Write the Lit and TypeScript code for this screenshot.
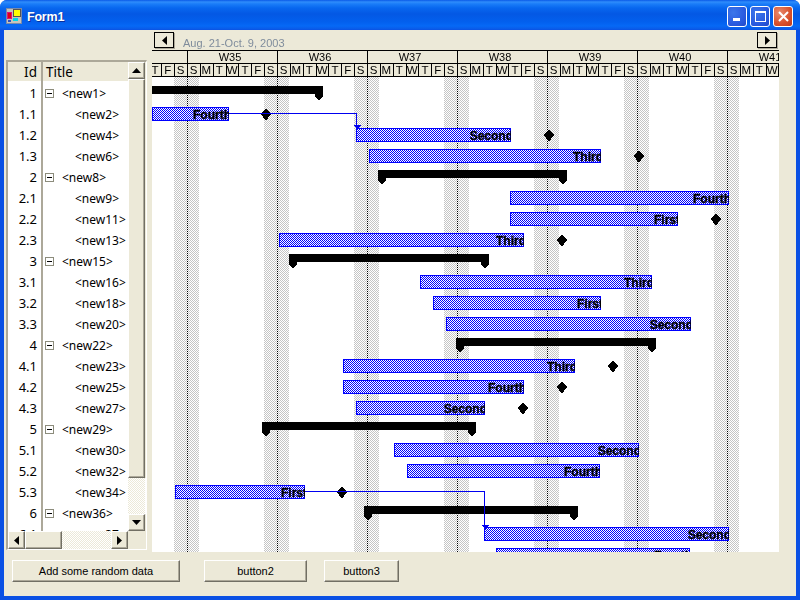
import { LitElement, html, svg, css } from "lit";
import { customElement } from "lit/decorators.js";

interface Row { id: string; n: number; parent: boolean }
const rows: Row[] = [
  ["1",1,1],["1.1",2,0],["1.2",4,0],["1.3",6,0],["2",8,1],["2.1",9,0],["2.2",11,0],["2.3",13,0],
  ["3",15,1],["3.1",16,0],["3.2",18,0],["3.3",20,0],["4",22,1],["4.1",23,0],["4.2",25,0],["4.3",27,0],
  ["5",29,1],["5.1",30,0],["5.2",32,0],["5.3",34,0],["6",36,1],["6.1",37,0],
].map(([id, n, p]) => ({ id: id as string, n: n as number, parent: !!p }));

// row index, start x, end x, label, milestone x
const bars: [number, number, number, string, number?][] = [
  [1,152,229,"Fourth",266],[2,356,511,"Second",549],[3,369,601,"Third",639],
  [5,510,729,"Fourth"],[6,510,678,"First",716],[7,279,524,"Third",562],
  [9,420,652,"Third"],[10,433,601,"First"],[11,446,691,"Second"],
  [13,343,575,"Third",613],[14,343,524,"Fourth",562],[15,356,485,"Second",523],
  [17,394,639,"Second"],[18,407,600,"Fourth"],[19,175,305,"First",342],
  [21,484,729,"Second"],[22,496,690,"Fourth"],
];
const summaries: [number, number, number][] = [
  [0,140,323],[4,378,567],[8,289,489],[12,456,656],[16,262,476],[20,364,578],
];
const weeks = [97,187,277,367,457,547,637,727];
const DAYS = ["S","M","T","W","T","F","S"];
const rowTop = (i: number) => 86 + 21 * i;
const OX = 152, OY = 50;

/** Paints a one-pixel checker with exact pixels. */
function checker(g: CanvasRenderingContext2D, x0: number, x1: number, y0: number, y1: number, color: string) {
  g.fillStyle = color;
  for (let y = y0; y < y1; y++) {
    for (let x = x0 + ((x0 + y) % 2); x < x1; x += 2) g.fillRect(x, y, 1, 1);
  }
}

@customElement("app-root")
export class AppRoot extends LitElement {
  static styles = css`
    :host { display: block; width: 800px; height: 600px; background: #fff; overflow: hidden; font-family: "Noto Sans", "DejaVu Sans", sans-serif; }
    .window { width: 800px; height: 600px; display: flex; flex-direction: column; border-radius: 7px 7px 0 0; overflow: hidden; background: #0a50e4; }
    .titlebar { height: 30px; flex: none; display: flex; align-items: center; padding: 0 7px 0 6px; gap: 5px;
      background: linear-gradient(#0a5ae8 0, #2f8dfb 2px, #1a7cf8 4px, #0867ef 8px, #0458e4 14px, #0360ee 22px, #0669f6 26px, #0a5be8 29px, #0a50e4 30px); }
    .app-icon { flex: none; margin-top: 1px; }
    .title { flex: 1; color: #fff; font: bold 12.5px "Liberation Sans", sans-serif; letter-spacing: -.2px; margin-top: 3px; text-shadow: 1px 1px 0 #0a2f9c; }
    .caps { display: flex; gap: 3px; margin-top: 3px; }
    .cap { width: 20px; height: 21px; box-sizing: border-box; border: 1px solid #fff; border-radius: 3px; display: flex; align-items: center; justify-content: center;
      background: radial-gradient(circle at 30% 30%, #3c76ea, #2a5be0 60%, #2248c8); }
    .cap.close { background: radial-gradient(circle at 30% 30%, #e88a6e, #d8502c 60%, #c0391a); }
    .client { flex: 1; margin: 0 4px 4px; background: #ece9d8; display: flex; flex-direction: column; min-height: 0; }
    .main { height: 522px; display: flex; flex: none; padding-left: 2px; gap: 5px; }
    .tree { width: 141px; height: 490px; margin-top: 30px; box-sizing: border-box; flex: none; display: grid;
      grid-template-columns: minmax(0, 1fr) 18px; grid-template-rows: minmax(0, 1fr) 18px;
      border-top: 2px solid #aca899; border-left: 2px solid #aca899; border-right: 1px solid #fff; border-bottom: 1px solid #fff; background: #ece9d8; }
    .list { overflow: hidden; background: #fff; font-size: 12px; color: #000; }
    .lrow { display: grid; grid-template-columns: 35px 1fr; height: 21px; align-items: center; }
    .lrow.head { height: 19px; background: #ece9d8; }
    .lid { padding: 0 4px 0 0; box-sizing: border-box; border-right: 2px solid #aca899; height: 100%; display: flex; align-items: center; justify-content: flex-end; width: 35px; }
    .lrow:not(.head) .lid, .lrow:not(.head) .ltitle { padding-top: 3px; box-sizing: border-box; }
    .lrow:not(.head) .lid { font-size: 13px; }
    .lrow.head .lid { font-size: 13.5px; }
    .ltitle { display: flex; align-items: center; padding-left: 2px; gap: 8px; white-space: nowrap; height: 100%; }
    .ltitle.leaf { padding-left: 32px; }
    .ltitle.hd { padding-left: 3px; font-size: 13.5px; }
    .minus { width: 9px; height: 9px; flex: none; box-sizing: border-box; border: 1px solid #8c8c7c; position: relative; background: #fff; }
    .minus::after { content: ""; position: absolute; left: 1px; right: 1px; top: 3px; height: 1px; background: #000; }
    .vbar { display: flex; flex-direction: column; background: #ece9d8; min-height: 0; }
    .hbar { display: flex; background: #ece9d8; min-width: 0; }
    .sbtn { box-sizing: border-box; flex: none; display: flex; align-items: center; justify-content: center; background: #ece9d8;
      border-top: 1px solid #fff; border-left: 1px solid #fff; border-right: 1px solid #716f64; border-bottom: 1px solid #716f64; box-shadow: inset -1px -1px 0 #aca899; }
    .vbar .sbtn.arrow { height: 17px; width: 17px; }
    .hbar .sbtn.arrow { width: 17px; height: 18px; }
    .vthumb { height: 399px; width: 17px; }
    .hthumb { width: 37px; height: 18px; }
    .track { flex: 1 1 0; overflow: hidden; background: #fff; min-width: 0; min-height: 0; }
    .track canvas { display: block; }
    .corner { background: #ece9d8; }
    .chart { width: 627px; flex: none; display: flex; flex-direction: column; }
    .nav { height: 20px; flex: none; display: flex; align-items: flex-start; padding: 2px 2px 0; box-sizing: border-box; }
    .navbtn { width: 20px; height: 16px; box-sizing: border-box; border: 1px solid #000; display: flex; align-items: center; justify-content: center; box-shadow: 1px 1px 0 #aca899; }
    .range { flex: 1; margin: 5px 0 0 9px; font: 11px "Liberation Sans", sans-serif; color: #7f8c9c; }
    .canvas { position: relative; width: 627px; height: 502px; flex: none; }
    .paint { display: block; }
    svg.gantt { position: absolute; inset: 0; display: block; }
    .day { font: 11.5px "Liberation Sans", sans-serif; fill: #000; text-anchor: middle; }
    .wk { font: 11px "Liberation Sans", sans-serif; fill: #000; text-anchor: middle; }
    .lbl { font: bold 12px "Liberation Sans", sans-serif; fill: #000; stroke: #000; stroke-width: .35px; text-anchor: end; }
    .buttons { flex: 1; display: flex; padding: 8px 0 0 8px; align-items: flex-start; }
    .btn { height: 22px; box-sizing: border-box; flex: none; display: flex; align-items: center; justify-content: center; font: 11px "Liberation Sans", sans-serif; color: #000; background: #ece9d8;
      border-top: 1px solid #fff; border-left: 1px solid #fff; border-right: 1px solid #716f64; border-bottom: 1px solid #716f64; box-shadow: inset -1px -1px 0 #aca899; }
    .b1 { width: 168px; margin-right: 24px; }
    .b2 { width: 103px; margin-right: 17px; }
    .b3 { width: 75px; }
  `;

  firstUpdated() {
    const root = this.renderRoot as ShadowRoot;
    const paint = root.querySelector("canvas.paint") as HTMLCanvasElement;
    const g = paint.getContext("2d")!;
    g.translate(-OX, -OY);
    g.fillStyle = "#fff";
    g.fillRect(OX, 77, 627, 475);
    for (const w of weeks) checker(g, Math.max(w + 77, OX), Math.min(w + 102, 779), 77, 552, "#c4c4c4");
    for (const w of weeks) {
      if (w < 187) continue;
      for (let y = 77; y < 552; y += 2) {
        g.fillStyle = "#fff"; g.fillRect(w, y + 1, 1, 1);
        g.fillStyle = "#000"; g.fillRect(w, y, 1, 1);
      }
    }
    for (const [i, a, b] of bars) {
      const t = rowTop(i);
      g.fillStyle = "#fff"; g.fillRect(a, t, b - a, 14);
      checker(g, a, b, t, t + 14, "#0000ff");
      g.fillStyle = "#0000ff";
      g.fillRect(a, t, b - a, 1); g.fillRect(a, t + 13, b - a, 1);
      g.fillRect(a, t, 1, 14); g.fillRect(b - 1, t, 1, 14);
    }
    root.querySelectorAll<HTMLCanvasElement>(".track canvas").forEach((c) => {
      checker(c.getContext("2d")!, 0, c.width, 0, c.height, "#ece9d8");
    });
  }

  private overlay() {
    const dayParts: unknown[] = [];
    for (const w of weeks) {
      for (let d = 0; d < 7; d++) {
        const x = w + (90 * d) / 7;
        const xe = Math.round(w + (90 * (d + 1)) / 7);
        if (xe <= OX || x > 779) continue;
        const lx = Math.min(xe, 778);
        dayParts.push(svg`<line x1=${lx + 0.5} x2=${lx + 0.5} y1="63" y2="77" stroke="#000"/>`);
        if (x + 6 > OX && x + 6 < 779) dayParts.push(svg`<text class="day" x=${x + 6.5} y="74">${DAYS[d]}</text>`);
      }
    }
    return svg`
      <g transform="translate(${-OX} ${-OY})">
        <line x1="152" x2="779" y1="50.5" y2="50.5" stroke="#000"/>
        <line x1="152" x2="779" y1="63.5" y2="63.5" stroke="#000"/>
        <line x1="152" x2="779" y1="76.5" y2="76.5" stroke="#000"/>
        ${weeks.filter((w) => w >= 187).map((w, i) => svg`
          <line x1=${w + 0.5} x2=${w + 0.5} y1="50" y2="64" stroke="#000"/>
          <text class="wk" x=${w + 43} y="61">W${35 + i}</text>`)}
        ${dayParts}
        ${summaries.map(([i, a, b]) => {
          const t = rowTop(i);
          const pent = (x: number) => `${x},${t + 8} ${x + 8},${t + 8} ${x + 8},${t + 10} ${x + 5},${t + 14} ${x + 3},${t + 14} ${x},${t + 10}`;
          return svg`<rect x=${a} y=${t} width=${b - a} height="8" fill="#000"/>
            ${a > OX ? svg`<polygon points=${pent(a)} fill="#000"/>` : null}
            <polygon points=${pent(b - 8)} fill="#000"/>`;
        })}
        ${bars.map(([i, a, b, label, ms]) => {
          const t = rowTop(i);
          const cy = t + 7;
          return svg`
            ${ms ? svg`<polygon points="${ms},${cy - 6} ${ms + 5},${cy} ${ms},${cy + 7} ${ms - 5},${cy}" fill="#000"/>` : null}
            <svg x=${a} y=${t} width=${b - a} height="14" overflow="hidden">
              <text class="lbl" x=${b - a + 2} y="11.5">${label}</text>
            </svg>`;
        })}
        <polyline points="229,113.5 356.5,113.5 356.5,126" fill="none" stroke="#0000f0"/>
        <polygon points="353,125 361,125 357,129" fill="#0000f0"/>
        <polyline points="305,491.5 484.5,491.5 484.5,526" fill="none" stroke="#0000f0"/>
        <polygon points="481,525 489,525 485,529" fill="#0000f0"/>
      </g>`;
  }

  render() {
    return html`
      <div class="window">
        <div class="titlebar">
          <svg class="app-icon" width="16" height="16" viewBox="0 0 16 16" shape-rendering="crispEdges">
            <rect x="0.5" y="0.5" width="15" height="15" fill="#c6c3bc" stroke="#7a8aa8"/>
            <rect x="1" y="4" width="5" height="7" fill="#e0107a"/><rect x="2" y="5" width="3" height="5" fill="#e00010"/>
            <rect x="7" y="1" width="7" height="7" fill="#ffff00" stroke="#555" stroke-width="1"/>
            <rect x="7" y="10" width="5" height="3" fill="#00d8e8"/>
            <rect x="2" y="12" width="3" height="2" fill="#3050c0"/>
          </svg>
          <div class="title">Form1</div>
          <div class="caps">
            <div class="cap"><svg width="13" height="13" viewBox="0 0 13 13"><rect x="2" y="8" width="7" height="3" fill="#fff"/></svg></div>
            <div class="cap"><svg width="13" height="13" viewBox="0 0 13 13" fill="none" stroke="#fff"><rect x="1.5" y="1.5" width="10" height="10"/><rect x="1" y="1" width="11" height="2" fill="#fff" stroke="none"/></svg></div>
            <div class="cap close"><svg width="13" height="13" viewBox="0 0 13 13" stroke="#fff" stroke-width="2"><path d="M2 2 L11 11 M11 2 L2 11"/></svg></div>
          </div>
        </div>
        <div class="client">
          <div class="main">
            <div class="tree">
              <div class="list">
                <div class="lrow head"><div class="lid">Id</div><div class="ltitle hd">Title</div></div>
                ${rows.map((r) => html`
                  <div class="lrow">
                    <div class="lid">${r.id}</div>
                    <div class="ltitle ${r.parent ? "" : "leaf"}">
                      ${r.parent ? html`<span class="minus"></span>` : null}<span>&lt;new${r.n}&gt;</span>
                    </div>
                  </div>`)}
              </div>
              <div class="vbar">
                <div class="sbtn arrow"><svg width="9" height="5" viewBox="0 0 9 5"><polygon points="4.5,0 9,5 0,5"/></svg></div>
                <div class="sbtn vthumb"></div>
                <div class="track"><canvas width="17" height="40"></canvas></div>
                <div class="sbtn arrow"><svg width="9" height="5" viewBox="0 0 9 5"><polygon points="0,0 9,0 4.5,5"/></svg></div>
              </div>
              <div class="hbar">
                <div class="sbtn arrow"><svg width="5" height="9" viewBox="0 0 5 9"><polygon points="5,0 5,9 0,4.5"/></svg></div>
                <div class="sbtn hthumb"></div>
                <div class="track"><canvas width="60" height="18"></canvas></div>
                <div class="sbtn arrow"><svg width="5" height="9" viewBox="0 0 5 9"><polygon points="0,0 5,4.5 0,9"/></svg></div>
              </div>
              <div class="corner"></div>
            </div>
            <div class="chart">
              <div class="nav">
                <div class="navbtn"><svg width="5" height="9" viewBox="0 0 5 9"><polygon points="5,0 5,9 0,4.5"/></svg></div>
                <div class="range">Aug. 21-Oct. 9, 2003</div>
                <div class="navbtn"><svg width="5" height="9" viewBox="0 0 5 9"><polygon points="0,0 5,4.5 0,9"/></svg></div>
              </div>
              <div class="canvas">
                <canvas class="paint" width="627" height="502"></canvas>
                <svg class="gantt" width="627" height="502" viewBox="0 0 627 502" shape-rendering="crispEdges">${this.overlay()}</svg>
              </div>
            </div>
          </div>
          <div class="buttons">
            <div class="btn b1">Add some random data</div>
            <div class="btn b2">button2</div>
            <div class="btn b3">button3</div>
          </div>
        </div>
      </div>`;
  }
}
